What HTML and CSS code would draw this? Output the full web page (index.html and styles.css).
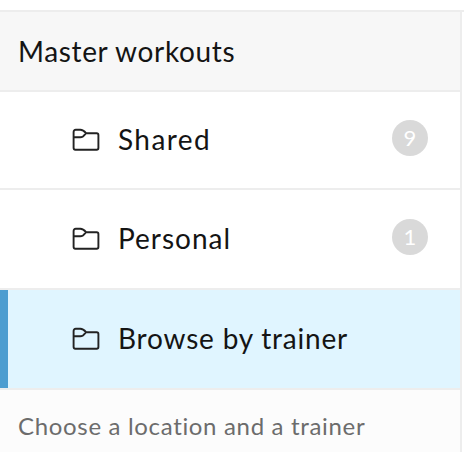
FILE: index.html
```html
<!DOCTYPE html>
<html lang="en">

<head>
    <meta charset="UTF-8">
    <title>Master workouts</title>
    <meta name="viewport" content="width=device-width, initial-scale=1.0">
    <link rel="stylesheet" href="styles.css">
</head>

<body>

    <svg class="sprite" aria-hidden="true">
        <symbol id="folder" viewBox="0 0 28 24">
            <path d="M1.6 9.3V4Q1.6 1.8 3.8 1.8H8.3C11 1.8 12.2 3 14 5.2H24.7Q26.4 5.2 26.4 6.9V20Q26.4 21.7 24.7 21.7H3.3Q1.6 21.7 1.6 20V9.3H8.3C11.3 9.3 12.2 7.8 14 5.2" />
        </symbol>
    </svg>

    <div class="page">
        <div class="sidebar">
            <h2 class="title">Master workouts</h2>

            <ul class="folders">
                <li class="folder folder-first">
                    <svg class="icon"><use href="#folder" /></svg>
                    <span class="name shared">Shared</span>
                    <span class="badge">9</span>
                </li>
                <li class="folder">
                    <svg class="icon"><use href="#folder" /></svg>
                    <span class="name personal">Personal</span>
                    <span class="badge">1</span>
                </li>
                <li class="folder active">
                    <svg class="icon"><use href="#folder" /></svg>
                    <span class="name">Browse by trainer</span>
                </li>
            </ul>

            <p class="hint">Choose a location and a trainer</p>
        </div>
    </div>

</body>

</html>
```

FILE: styles.css
```css
* {
    box-sizing: border-box;
}

body {
    margin: 0;
    padding-top: 10px;
    font-family: Lato, "Noto Sans", sans-serif;
    font-size: 28px;
    color: #141414;
    background: #fff;
    overflow: hidden;
}

.sprite {
    display: none;
}

.page {
    border-top: 2px solid #ededed;
}

.sidebar {
    width: 462px;
    height: 440px;
    border-right: 2px solid #ededed;
    background: #fcfcfc;
}

.title {
    display: flex;
    align-items: center;
    height: 80px;
    margin: 0;
    padding: 0 0 1px 18px;
    font-size: 28px;
    font-weight: 400;
    letter-spacing: 0.65px;
    background: #f7f7f7;
    border-bottom: 2px solid #ededed;
}

.folders {
    margin: 0;
    padding: 0;
    list-style: none;
}

.folder {
    display: flex;
    align-items: center;
    height: 100px;
    padding: 0 32px 0 72px;
    background: #fff;
    border-bottom: 2px solid #ededed;
}

.folder-first {
    height: 98px;
}

.icon {
    width: 28px;
    height: 24px;
    margin-right: 18px;
    fill: none;
    stroke: #222;
    stroke-width: 1.9;
    stroke-linejoin: round;
}

.name {
    flex: 1;
    padding-bottom: 2px;
    letter-spacing: 0.8px;
}

.shared {
    letter-spacing: 1.4px;
}

.personal {
    letter-spacing: 1px;
}

.badge {
    width: 36px;
    height: 36px;
    margin-bottom: 4px;
    border-radius: 50%;
    font-size: 22px;
    line-height: 35px;
    text-align: center;
    color: #fff;
    background: #d9d9d9;
}

/* selected folder */
.active {
    background: #e0f5ff;
    box-shadow: inset 8px 0 #4d9dd0;
}

.hint {
    margin: 0;
    padding: 21px 18px 0;
    font-size: 24px;
    line-height: 30px;
    letter-spacing: 0.67px;
    color: #6c6c6c;
}
```
